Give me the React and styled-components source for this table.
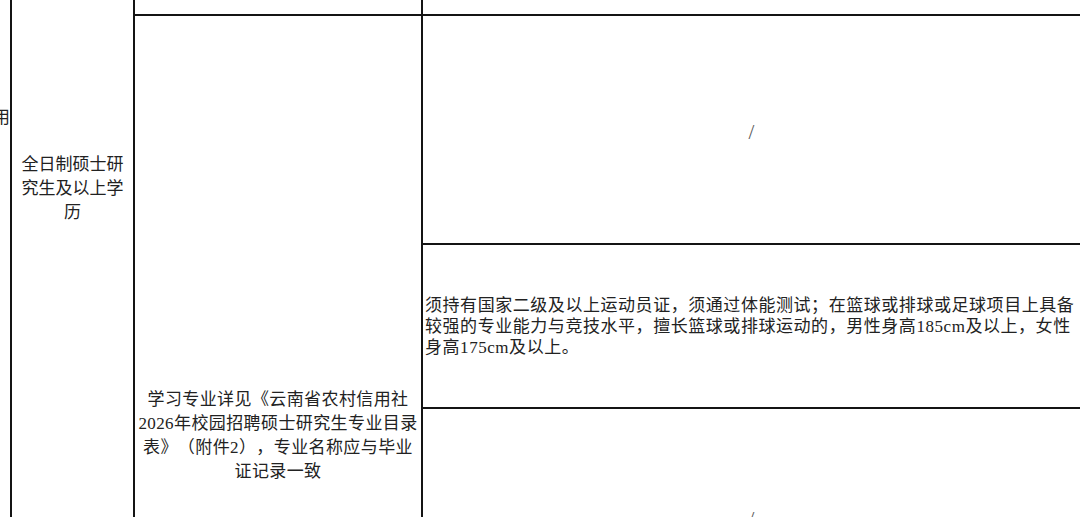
import React from "react";
import styled, { createGlobalStyle } from "styled-components";

const GlobalStyle = createGlobalStyle`
  html, body {
    margin: 0;
    padding: 0;
    background: #ffffff;
    overflow: hidden;
  }
`;

const Page = styled.div`
  width: 1080px;
  height: 517px;
  overflow: hidden;
  background: #ffffff;
`;

const Sheet = styled.div`
  display: grid;
  grid-template-columns: 10px 121px 286px 657px;
  grid-template-rows: 14px 227px 162px 216px 229px;
  gap: 2px;
  background: #141414;
  width: 1080px;
  font-family: "Liberation Serif", "Noto Sans CJK SC", serif;
  color: #222222;
  text-spacing-trim: space-all;
`;

const Cell = styled.div`
  background: #ffffff;
  grid-column: ${(p) => p.$col};
  grid-row: ${(p) => p.$row};
  display: flex;
  overflow: hidden;
  min-width: 0;
`;

const CenterCell = styled(Cell)`
  align-items: center;
  justify-content: center;
  text-align: center;
`;

const EdgeCell = styled(Cell)`
  justify-content: flex-end;
  align-items: flex-start;
  padding-top: 106px;
`;

const TopCell = styled(Cell)`
  justify-content: center;
  align-items: flex-start;
  padding-top: ${(p) => p.$top}px;
  text-align: center;
`;

const Label = styled.div`
  font-size: 17px;
  line-height: 24px;
  white-space: nowrap;
  flex-shrink: 0;
  letter-spacing: ${(p) => p.$spacing || 0}px;
`;

const Note = styled.div`
  font-size: 17px;
  line-height: 21px;
  letter-spacing: 0.55px;
  white-space: nowrap;
  padding-left: 2px;
`;

const NoteCell = styled(Cell)`
  align-items: center;
  justify-content: flex-start;
`;

const Slash = styled.span`
  font-family: "Liberation Serif", serif;
  font-size: 21px;
  line-height: 24px;
  color: #5a5a5a;
  padding-top: 4px;
`;

export default function App() {
  return (
    <Page>
      <GlobalStyle />
      <Sheet>
        <EdgeCell $col="1" $row="1 / 6">
          <Label>用</Label>
        </EdgeCell>
        <TopCell $col="2" $row="1 / 6" $top={153}>
          <Label>
            全日制硕士研
            <br />
            究生及以上学
            <br />
            历
          </Label>
        </TopCell>
        <Cell $col="3" $row="1" />
        <Cell $col="4" $row="1" />
        <CenterCell $col="3" $row="2 / 6">
          <Label $spacing={0.4}>
            学习专业详见《云南省农村信用社
            <br />
            2026年校园招聘硕士研究生专业目录
            <br />
            表》（附件2），专业名称应与毕业
            <br />
            证记录一致
          </Label>
        </CenterCell>
        <CenterCell $col="4" $row="2">
          <Slash>/</Slash>
        </CenterCell>
        <NoteCell $col="4" $row="3">
          <Note>
            须持有国家二级及以上运动员证，须通过体能测试；在篮球或排球或足球项目上具备
            <br />
            较强的专业能力与竞技水平，擅长篮球或排球运动的，男性身高185cm及以上，女性
            <br />
            身高175cm及以上。
          </Note>
        </NoteCell>
        <CenterCell $col="4" $row="4">
          <Slash>/</Slash>
        </CenterCell>
        <Cell $col="4" $row="5" />
      </Sheet>
    </Page>
  );
}
